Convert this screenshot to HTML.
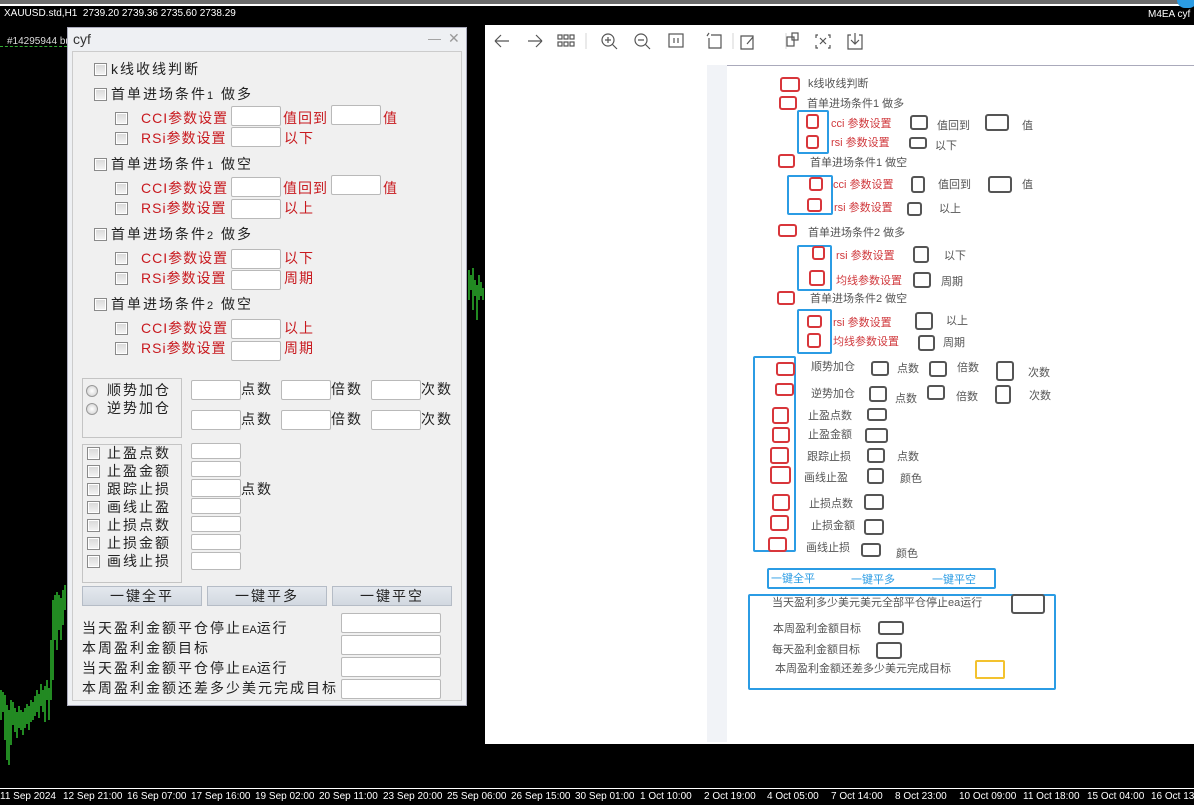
<!DOCTYPE html><html><head><meta charset="utf-8"><style>
*{box-sizing:border-box;margin:0;padding:0}
body{width:1194px;height:805px;background:#000;position:relative;overflow:hidden;font-family:"Liberation Sans","Noto Sans CJK SC",sans-serif}
div,span{position:absolute}
.t{white-space:nowrap;line-height:16px;font-size:14px;color:#222;letter-spacing:2px}
.rd{color:#c8191e;letter-spacing:1px}
.cb{width:13px;height:13px;border:1px solid #8a8a8a;background:linear-gradient(#d8d8d8,#f4f4f4);box-shadow:inset 0 0 0 1px #fff}
.in{background:#fff;border:1px solid #b9b9b9;border-radius:2px}
.rad{width:12px;height:12px;border-radius:50%;border:1px solid #999;background:radial-gradient(#fff,#ccc)}
.bt{height:20px;width:120px;background:linear-gradient(#e4e8ee,#d2d8e0);border:1px solid #b5bcc6;font-size:14px;text-align:center;line-height:18px;color:#222;letter-spacing:2px}
.s{white-space:nowrap;font-size:11px;line-height:13px;color:#555}
.sr{color:#d0393d}
.r{border:2px solid #d8363b;border-radius:3px}
.d{border:2px solid #555;border-radius:3px}
.b{border:2px solid #2b9ce4;border-radius:2px}
.ax{font-size:10px;color:#fff;top:791px;white-space:nowrap;font-family:"Liberation Sans",sans-serif}
</style></head><body>
<div style="left:0;top:0;width:1194px;height:6px;background:#6c6c6c;border-bottom:2px solid #fff"></div>
<div class="t" style="left:4px;top:8px;font-size:10px;color:#fff;line-height:12px;letter-spacing:0">XAUUSD.std,H1&nbsp; 2739.20 2739.36 2735.60 2738.29</div>
<div class="t" style="left:1148px;top:9px;font-size:10px;color:#fff;line-height:12px;letter-spacing:0">M4EA cyf</div>
<div style="left:1177px;top:-8px;width:20px;height:16px;border-radius:8px;background:#2b9ce4"></div>
<div style="left:0;top:46px;width:67px;border-top:1px dashed #3a3;"></div>
<div class="t" style="left:7px;top:36px;font-size:10px;color:#ddd;line-height:12px;letter-spacing:0">#14295944 bu</div>
<svg style="position:absolute;left:0;top:0" width="1194" height="805">
<g stroke="#35d335" stroke-width="1.3">
<path d="M1 690V720M3 692V712M5 695V740M7 705V760M9 710V765M11 700V745M13 702V725M15 708V732M17 712V738M19 706V728M21 710V730M23 712V735M25 708V728M27 704V724M29 706V730M31 700V722M33 702V720M35 696V716M37 690V712M39 694V718M41 684V706M43 690V712M45 686V722M47 680V700M49 688V720M51 640V700M53 600V680M55 595V640M57 592V650M59 595V630M61 598V640M63 590V625M65 585V610"/>
<path d="M469 270V300M471 275V290M473 268V310M475 280V296M477 285V320M479 275V300M481 282V296M483 288V300"/>
</g>
<line x1="0" y1="788.5" x2="1194" y2="788.5" stroke="#fff"/>
</svg>
<div class="ax" style="left:0">11 Sep 2024</div><div class="ax" style="left:63px">12 Sep 21:00</div><div class="ax" style="left:127px">16 Sep 07:00</div><div class="ax" style="left:191px">17 Sep 16:00</div><div class="ax" style="left:255px">19 Sep 02:00</div><div class="ax" style="left:319px">20 Sep 11:00</div><div class="ax" style="left:383px">23 Sep 20:00</div><div class="ax" style="left:447px">25 Sep 06:00</div><div class="ax" style="left:511px">26 Sep 15:00</div><div class="ax" style="left:575px">30 Sep 01:00</div><div class="ax" style="left:640px">1 Oct 10:00</div><div class="ax" style="left:704px">2 Oct 19:00</div><div class="ax" style="left:767px">4 Oct 05:00</div><div class="ax" style="left:831px">7 Oct 14:00</div><div class="ax" style="left:895px">8 Oct 23:00</div><div class="ax" style="left:959px">10 Oct 09:00</div><div class="ax" style="left:1023px">11 Oct 18:00</div><div class="ax" style="left:1087px">15 Oct 04:00</div><div class="ax" style="left:1151px">16 Oct 13:00</div>

<div style="left:67px;top:27px;width:400px;height:679px;background:#eef0f3;border:1px solid #aab"></div>
<div class="t" style="left:73px;top:31px;font-size:14px;color:#333;letter-spacing:0">cyf</div>
<div class="t" style="left:428px;top:31px;color:#999;font-size:13px">—</div>
<div class="t" style="left:448px;top:30px;color:#999;font-size:14px">✕</div>
<div style="left:72px;top:51px;width:390px;height:650px;background:#f0f0f0;border:1px solid #ccc"></div>

<div class="cb" style="left:94px;top:63px"></div><div class="t" style="left:111px;top:61px">k线收线判断</div>
<div class="cb" style="left:94px;top:88px"></div><div class="t" style="left:111px;top:86px">首单进场条件<span style="position:static;font-size:11px">1</span> 做多</div>
<div class="cb" style="left:115px;top:112px"></div><div class="t rd" style="left:141px;top:110px">CCI参数设置</div><div class="in" style="left:231px;top:106px;width:50px;height:20px"></div><div class="t rd" style="left:283px;top:110px">值回到</div><div class="in" style="left:331px;top:105px;width:50px;height:20px"></div><div class="t rd" style="left:383px;top:110px">值</div>
<div class="cb" style="left:115px;top:132px"></div><div class="t rd" style="left:141px;top:130px">RSi参数设置</div><div class="in" style="left:231px;top:127px;width:50px;height:20px"></div><div class="t rd" style="left:284px;top:130px">以下</div>

<div class="cb" style="left:94px;top:158px"></div><div class="t" style="left:111px;top:156px">首单进场条件<span style="position:static;font-size:11px">1</span> 做空</div>
<div class="cb" style="left:115px;top:182px"></div><div class="t rd" style="left:141px;top:180px">CCI参数设置</div><div class="in" style="left:231px;top:177px;width:50px;height:20px"></div><div class="t rd" style="left:283px;top:180px">值回到</div><div class="in" style="left:331px;top:175px;width:50px;height:20px"></div><div class="t rd" style="left:383px;top:180px">值</div>
<div class="cb" style="left:115px;top:202px"></div><div class="t rd" style="left:141px;top:200px">RSi参数设置</div><div class="in" style="left:231px;top:199px;width:50px;height:20px"></div><div class="t rd" style="left:284px;top:200px">以上</div>

<div class="cb" style="left:94px;top:228px"></div><div class="t" style="left:111px;top:226px">首单进场条件<span style="position:static;font-size:11px">2</span> 做多</div>
<div class="cb" style="left:115px;top:252px"></div><div class="t rd" style="left:141px;top:250px">CCI参数设置</div><div class="in" style="left:231px;top:249px;width:50px;height:20px"></div><div class="t rd" style="left:284px;top:250px">以下</div>
<div class="cb" style="left:115px;top:272px"></div><div class="t rd" style="left:141px;top:270px">RSi参数设置</div><div class="in" style="left:231px;top:270px;width:50px;height:20px"></div><div class="t rd" style="left:284px;top:270px">周期</div>

<div class="cb" style="left:94px;top:298px"></div><div class="t" style="left:111px;top:296px">首单进场条件<span style="position:static;font-size:11px">2</span> 做空</div>
<div class="cb" style="left:115px;top:322px"></div><div class="t rd" style="left:141px;top:320px">CCI参数设置</div><div class="in" style="left:231px;top:319px;width:50px;height:20px"></div><div class="t rd" style="left:284px;top:320px">以上</div>
<div class="cb" style="left:115px;top:342px"></div><div class="t rd" style="left:141px;top:340px">RSi参数设置</div><div class="in" style="left:231px;top:341px;width:50px;height:20px"></div><div class="t rd" style="left:284px;top:340px">周期</div>

<div style="left:82px;top:378px;width:100px;height:60px;border:1px solid #c4c4c4"></div>
<div class="rad" style="left:86px;top:385px"></div><div class="t" style="left:107px;top:382px">顺势加仓</div>
<div class="rad" style="left:86px;top:403px"></div><div class="t" style="left:107px;top:400px">逆势加仓</div>
<div class="in" style="left:191px;top:380px;width:50px;height:20px"></div><div class="t" style="left:241px;top:381px">点数</div>
<div class="in" style="left:281px;top:380px;width:50px;height:20px"></div><div class="t" style="left:331px;top:381px">倍数</div>
<div class="in" style="left:371px;top:380px;width:50px;height:20px"></div><div class="t" style="left:421px;top:381px">次数</div>
<div class="in" style="left:191px;top:410px;width:50px;height:20px"></div><div class="t" style="left:241px;top:411px">点数</div>
<div class="in" style="left:281px;top:410px;width:50px;height:20px"></div><div class="t" style="left:331px;top:411px">倍数</div>
<div class="in" style="left:371px;top:410px;width:50px;height:20px"></div><div class="t" style="left:421px;top:411px">次数</div>

<div style="left:82px;top:444px;width:100px;height:139px;border:1px solid #c4c4c4"></div>
<div class="cb" style="left:87px;top:447px"></div><div class="t" style="left:107px;top:445px">止盈点数</div><div class="in" style="left:191px;top:443px;width:50px;height:16px"></div>
<div class="cb" style="left:87px;top:465px"></div><div class="t" style="left:107px;top:463px">止盈金额</div><div class="in" style="left:191px;top:461px;width:50px;height:16px"></div>
<div class="cb" style="left:87px;top:483px"></div><div class="t" style="left:107px;top:481px">跟踪止损</div><div class="in" style="left:191px;top:479px;width:50px;height:18px"></div><div class="t" style="left:241px;top:481px">点数</div>
<div class="cb" style="left:87px;top:501px"></div><div class="t" style="left:107px;top:499px">画线止盈</div><div class="in" style="left:191px;top:498px;width:50px;height:16px"></div>
<div class="cb" style="left:87px;top:519px"></div><div class="t" style="left:107px;top:517px">止损点数</div><div class="in" style="left:191px;top:516px;width:50px;height:16px"></div>
<div class="cb" style="left:87px;top:537px"></div><div class="t" style="left:107px;top:535px">止损金额</div><div class="in" style="left:191px;top:534px;width:50px;height:16px"></div>
<div class="cb" style="left:87px;top:555px"></div><div class="t" style="left:107px;top:553px">画线止损</div><div class="in" style="left:191px;top:552px;width:50px;height:18px"></div>

<div class="bt" style="left:82px;top:586px">一键全平</div>
<div class="bt" style="left:207px;top:586px">一键平多</div>
<div class="bt" style="left:332px;top:586px">一键平空</div>

<div class="t" style="left:82px;top:620px">当天盈利金额平仓停止<span style="position:static;font-size:11px;letter-spacing:0">EA</span>运行</div><div class="in" style="left:341px;top:613px;width:100px;height:20px"></div>
<div class="t" style="left:82px;top:640px">本周盈利金额目标</div><div class="in" style="left:341px;top:635px;width:100px;height:20px"></div>
<div class="t" style="left:82px;top:660px">当天盈利金额平仓停止<span style="position:static;font-size:11px;letter-spacing:0">EA</span>运行</div><div class="in" style="left:341px;top:657px;width:100px;height:20px"></div>
<div class="t" style="left:82px;top:680px">本周盈利金额还差多少美元完成目标</div><div class="in" style="left:341px;top:679px;width:100px;height:20px"></div>

<div style="left:485px;top:25px;width:709px;height:719px;background:#fff"></div>
<svg style="position:absolute;left:485px;top:25px" width="400" height="30" fill="none" stroke="#555" stroke-width="1.2">
<path d="M10 16H24M10 16l6-6M10 16l6 6"/><path d="M43 16H57M57 16l-6-6M57 16l-6 6"/>
<g><rect x="73" y="10" width="4" height="4"/><rect x="79" y="10" width="4" height="4"/><rect x="85" y="10" width="4" height="4"/><rect x="73" y="17" width="4" height="4"/><rect x="79" y="17" width="4" height="4"/><rect x="85" y="17" width="4" height="4"/></g>
<path d="M101 8V24M248 8V24M301 8V24" stroke="#ddd"/>
<circle cx="123" cy="15" r="6"/><path d="M127 19l5 5M120 15h6M123 12v6"/>
<circle cx="156" cy="15" r="6"/><path d="M160 19l5 5M153 15h6"/>
<rect x="184" y="9" width="14" height="13"/><path d="M189 13v5M193 13v5"/>
<path d="M226 10h10v13h-12v-10M224 8l-2 3"/>
<path d="M258 11h10v13h-12v-13h3M262 19l6-7"/>
<rect x="302" y="12" width="7" height="9"/><rect x="307" y="8" width="6" height="7"/>
<path d="M333 10h-2v3M343 10h2v3M333 23h-2v-3M343 23h2v-3M335 13l6 6M341 13l-6 6"/>
<path d="M366 10h-3v14h14v-14h-3M370 8v11M366 15l4 4 4-4"/>
</svg>
<div style="left:707px;top:65px;width:487px;height:677px;background:#f1f3f7"></div>
<div style="left:727px;top:65px;width:467px;height:677px;background:#fff;border-top:1px solid #aab"></div>

<div class="r" style="left:780px;top:77px;width:20px;height:15px"></div><div class="s" style="left:808px;top:78px">k线收线判断</div>
<div class="r" style="left:779px;top:96px;width:18px;height:14px"></div><div class="s" style="left:807px;top:98px">首单进场条件1 做多</div>
<div class="b" style="left:797px;top:110px;width:32px;height:44px"></div>
<div class="r" style="left:806px;top:114px;width:13px;height:15px"></div><div class="r" style="left:806px;top:135px;width:13px;height:14px"></div>
<div class="s sr" style="left:831px;top:118px">cci 参数设置</div><div class="s sr" style="left:831px;top:137px">rsi 参数设置</div>
<div class="d" style="left:910px;top:115px;width:18px;height:15px"></div><div class="s" style="left:937px;top:120px">值回到</div>
<div class="d" style="left:985px;top:114px;width:24px;height:17px"></div><div class="s" style="left:1022px;top:120px">值</div>
<div class="d" style="left:909px;top:137px;width:18px;height:12px"></div><div class="s" style="left:935px;top:140px">以下</div>

<div class="r" style="left:778px;top:154px;width:17px;height:14px"></div><div class="s" style="left:810px;top:157px">首单进场条件1 做空</div>
<div class="b" style="left:787px;top:175px;width:46px;height:40px"></div>
<div class="r" style="left:809px;top:177px;width:14px;height:14px"></div><div class="r" style="left:807px;top:198px;width:15px;height:14px"></div>
<div class="s sr" style="left:833px;top:179px">cci 参数设置</div><div class="s sr" style="left:834px;top:202px">rsi 参数设置</div>
<div class="d" style="left:911px;top:176px;width:14px;height:17px"></div><div class="s" style="left:938px;top:179px">值回到</div>
<div class="d" style="left:988px;top:176px;width:24px;height:17px"></div><div class="s" style="left:1022px;top:179px">值</div>
<div class="d" style="left:907px;top:202px;width:15px;height:14px"></div><div class="s" style="left:939px;top:203px">以上</div>

<div class="r" style="left:778px;top:224px;width:19px;height:13px"></div><div class="s" style="left:808px;top:227px">首单进场条件2 做多</div>
<div class="b" style="left:797px;top:245px;width:35px;height:46px"></div>
<div class="r" style="left:812px;top:246px;width:13px;height:14px"></div><div class="r" style="left:809px;top:270px;width:16px;height:16px"></div>
<div class="s sr" style="left:836px;top:250px">rsi 参数设置</div><div class="s sr" style="left:836px;top:275px">均线参数设置</div>
<div class="d" style="left:913px;top:246px;width:16px;height:17px"></div><div class="s" style="left:944px;top:250px">以下</div>
<div class="d" style="left:913px;top:272px;width:18px;height:16px"></div><div class="s" style="left:941px;top:276px">周期</div>

<div class="r" style="left:777px;top:291px;width:18px;height:14px"></div><div class="s" style="left:810px;top:293px">首单进场条件2 做空</div>
<div class="b" style="left:797px;top:309px;width:35px;height:45px"></div>
<div class="r" style="left:807px;top:315px;width:15px;height:13px"></div><div class="r" style="left:807px;top:333px;width:14px;height:15px"></div>
<div class="s sr" style="left:833px;top:317px">rsi 参数设置</div><div class="s sr" style="left:833px;top:336px">均线参数设置</div>
<div class="d" style="left:915px;top:312px;width:18px;height:18px"></div><div class="s" style="left:946px;top:315px">以上</div>
<div class="d" style="left:918px;top:335px;width:17px;height:16px"></div><div class="s" style="left:943px;top:337px">周期</div>

<div class="b" style="left:753px;top:356px;width:43px;height:196px"></div>
<div class="r" style="left:776px;top:362px;width:19px;height:14px"></div>
<div class="r" style="left:775px;top:383px;width:19px;height:13px"></div>
<div class="r" style="left:772px;top:407px;width:17px;height:17px"></div>
<div class="r" style="left:772px;top:427px;width:18px;height:16px"></div>
<div class="r" style="left:770px;top:447px;width:19px;height:17px"></div>
<div class="r" style="left:770px;top:466px;width:21px;height:18px"></div>
<div class="r" style="left:772px;top:494px;width:18px;height:17px"></div>
<div class="r" style="left:770px;top:515px;width:19px;height:16px"></div>
<div class="r" style="left:768px;top:537px;width:19px;height:15px"></div>
<div class="s" style="left:811px;top:361px">顺势加仓</div><div class="s" style="left:811px;top:388px">逆势加仓</div>
<div class="s" style="left:808px;top:410px">止盈点数</div><div class="s" style="left:808px;top:429px">止盈金额</div>
<div class="s" style="left:807px;top:451px">跟踪止损</div><div class="s" style="left:804px;top:472px">画线止盈</div>
<div class="s" style="left:809px;top:498px">止损点数</div><div class="s" style="left:811px;top:520px">止损金额</div>
<div class="s" style="left:806px;top:542px">画线止损</div>
<div class="d" style="left:871px;top:361px;width:18px;height:15px"></div><div class="s" style="left:897px;top:363px">点数</div>
<div class="d" style="left:929px;top:361px;width:18px;height:16px"></div><div class="s" style="left:957px;top:362px">倍数</div>
<div class="d" style="left:996px;top:361px;width:18px;height:20px"></div><div class="s" style="left:1028px;top:367px">次数</div>
<div class="d" style="left:869px;top:386px;width:18px;height:16px"></div><div class="s" style="left:895px;top:393px">点数</div>
<div class="d" style="left:927px;top:385px;width:18px;height:15px"></div><div class="s" style="left:956px;top:391px">倍数</div>
<div class="d" style="left:995px;top:385px;width:16px;height:19px"></div><div class="s" style="left:1029px;top:390px">次数</div>
<div class="d" style="left:867px;top:408px;width:20px;height:13px"></div>
<div class="d" style="left:865px;top:428px;width:23px;height:15px"></div>
<div class="d" style="left:867px;top:448px;width:18px;height:15px"></div><div class="s" style="left:897px;top:451px">点数</div>
<div class="d" style="left:867px;top:468px;width:17px;height:16px"></div><div class="s" style="left:900px;top:473px">颜色</div>
<div class="d" style="left:864px;top:494px;width:20px;height:16px"></div>
<div class="d" style="left:864px;top:519px;width:20px;height:16px"></div>
<div class="d" style="left:861px;top:543px;width:20px;height:14px"></div><div class="s" style="left:896px;top:548px">颜色</div>

<div class="b" style="left:767px;top:568px;width:229px;height:21px"></div>
<div class="s" style="left:771px;top:573px;color:#2b9ce4">一键全平</div><div class="s" style="left:851px;top:574px;color:#2b9ce4">一键平多</div><div class="s" style="left:932px;top:574px;color:#2b9ce4">一键平空</div>

<div class="b" style="left:748px;top:594px;width:308px;height:96px"></div>
<div class="s" style="left:772px;top:597px">当天盈利多少美元美元全部平仓停止ea运行</div><div class="d" style="left:1011px;top:594px;width:34px;height:20px"></div>
<div class="s" style="left:773px;top:623px">本周盈利金额目标</div><div class="d" style="left:878px;top:621px;width:26px;height:14px"></div>
<div class="s" style="left:772px;top:644px">每天盈利金额目标</div><div class="d" style="left:876px;top:642px;width:26px;height:17px"></div>
<div class="s" style="left:775px;top:663px">本周盈利金额还差多少美元完成目标</div><div style="left:975px;top:660px;width:30px;height:19px;border:2px solid #f3c22e;border-radius:2px"></div>
</body></html>
